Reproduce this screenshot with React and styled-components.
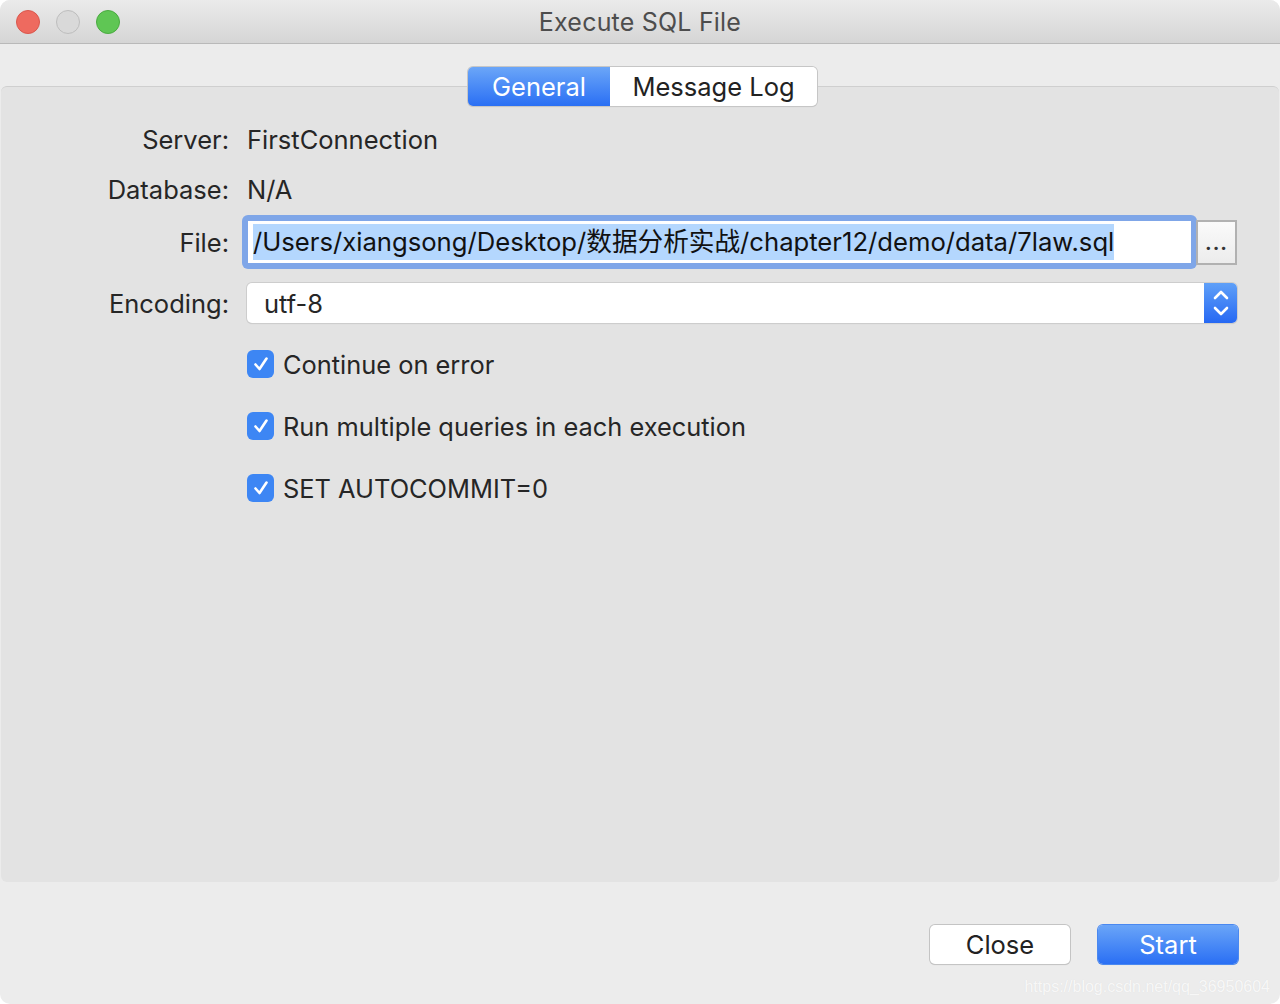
import React from 'react';
import styled, { createGlobalStyle } from 'styled-components';

const GlobalStyle = createGlobalStyle`
  html, body {
    margin: 0;
    padding: 0;
    background: #ffffff;
  }
  body {
    font-family: Inter, "Noto Sans", "Noto Sans CJK SC", sans-serif;
    color: #262626;
  }
`;

const Window = styled.div`
  display: flex;
  flex-direction: column;
  width: 1280px;
  height: 1004px;
  border-radius: 10px;
  overflow: hidden;
  background: #ececec;
  box-sizing: border-box;
`;

const TitleBar = styled.header`
  position: relative;
  display: flex;
  align-items: center;
  justify-content: center;
  height: 43px;
  flex-shrink: 0;
  background: linear-gradient(#ebebeb, #d5d5d5);
  border-bottom: 1px solid #b9b9b9;
`;

const Lights = styled.div`
  position: absolute;
  left: 16px;
  top: 10px;
  display: flex;
  gap: 16px;
`;

const Light = styled.span`
  width: 24px;
  height: 24px;
  border-radius: 50%;
  box-sizing: border-box;
  background: ${(p) => p.color};
  border: 1px solid ${(p) => p.edge};
`;

const Title = styled.div`
  font-size: 25px;
  color: #4d4d4d;
  letter-spacing: 0.2px;
`;

const Body = styled.div`
  flex: 1;
  display: flex;
  flex-direction: column;
  padding-top: 23px;
`;

const Tabs = styled.div`
  position: relative;
  z-index: 1;
  align-self: center;
  display: flex;
  height: 39px;
  margin-bottom: -20px;
  margin-left: 5px;
  border-radius: 5px;
  overflow: hidden;
  box-shadow: 0 0 0 1px #c6c6c6, 0 1px 1px rgba(0, 0, 0, 0.12);
`;

const Tab = styled.div`
  display: flex;
  align-items: center;
  justify-content: center;
  width: ${(p) => p.w}px;
  font-size: 25.5px;
  color: ${(p) => (p.active ? '#ffffff' : '#222222')};
  background: ${(p) => (p.active ? 'linear-gradient(#6ba6f8, #2a6ff4)' : '#ffffff')};
`;

const Panel = styled.section`
  height: 796px;
  margin: 0 1px;
  background: #e3e3e3;
  border-top: 1px solid #cfcfcf;
  border-radius: 6px;
  display: flex;
  flex-direction: column;
  padding-top: 32px;
  box-sizing: border-box;
`;

const Row = styled.div`
  display: flex;
  align-items: center;
  height: ${(p) => p.h}px;
  margin-top: ${(p) => p.mt || 0}px;
  padding-right: 42px;
`;

const Label = styled.div`
  width: 228px;
  text-align: right;
  font-size: 25.5px;
  color: #262626;
  flex-shrink: 0;
  padding-right: 18px;
  box-sizing: content-box;
`;

const Value = styled.div`
  font-size: 25.5px;
  color: #262626;
`;

const FileField = styled.div`
  flex: 1;
  height: 54px;
  margin-left: -5px;
  box-sizing: border-box;
  border-radius: 6px;
  background: #7fa6e8;
  padding: 6px;
  display: flex;
`;

const FileInner = styled.div`
  flex: 1;
  background: #ffffff;
  display: flex;
  align-items: center;
  padding-left: 5px;
  overflow: hidden;
`;

const Selected = styled.span`
  background: #b4d7fe;
  font-size: 25.65px;
  line-height: 36px;
  color: #111111;
  white-space: nowrap;
`;

const BrowseButton = styled.div`
  width: 41px;
  height: 45px;
  margin-left: -1px;
  box-sizing: border-box;
  border: 2px solid #b1b1b1;
  background: linear-gradient(#fafafa, #ececec);
  display: flex;
  align-items: flex-end;
  justify-content: center;
  padding-bottom: 8px;
  font-size: 20px;
  font-weight: bold;
  letter-spacing: 1px;
  color: #333333;
`;

const Select = styled.div`
  flex: 1;
  height: 40px;
  display: flex;
  border-radius: 5px;
  background: #ffffff;
  box-shadow: 0 0 0 1px #cdcdcd, 0 1px 1px rgba(0, 0, 0, 0.15);
  overflow: hidden;
`;

const SelectText = styled.div`
  flex: 1;
  display: flex;
  align-items: center;
  padding-left: 17px;
  font-size: 25.5px;
  color: #262626;
`;

const SelectArrows = styled.div`
  width: 33px;
  background: linear-gradient(#5fa0f8, #2668f3);
  display: flex;
  align-items: center;
  justify-content: center;
`;

const CheckRow = styled.div`
  display: flex;
  align-items: center;
  height: 40px;
  margin-top: ${(p) => p.mt}px;
  padding-left: 246px;
  gap: 9px;
  font-size: 25.4px;
  color: #262626;
`;

const Box = styled.span`
  width: 27px;
  height: 28px;
  border-radius: 6px;
  background: #3d86f4;
  display: flex;
  align-items: center;
  justify-content: center;
`;

const Footer = styled.footer`
  position: relative;
  flex: 1;
  display: flex;
  justify-content: flex-end;
  align-items: flex-start;
  gap: 28px;
  padding: 43px 42px 0 0;
`;

const Button = styled.div`
  width: 140px;
  height: 39px;
  box-sizing: border-box;
  border-radius: 5px;
  display: flex;
  align-items: center;
  justify-content: center;
  font-size: 25.5px;
  color: ${(p) => (p.primary ? '#ffffff' : '#222222')};
  background: ${(p) => (p.primary ? 'linear-gradient(#6aa5f8, #2a6ff4)' : '#ffffff')};
  box-shadow: ${(p) =>
    p.primary
      ? '0 0 0 1px #4a88f0, 0 1px 1px rgba(0,0,0,0.15)'
      : '0 0 0 1px #c4c4c4, 0 1px 1px rgba(0,0,0,0.18)'};
`;

const Watermark = styled.div`
  position: absolute;
  right: 10px;
  bottom: 8px;
  font-family: "Liberation Sans", Arial, sans-serif;
  font-size: 16px;
  color: rgba(255, 255, 255, 0.8);
  text-shadow: 0 0 1px rgba(0, 0, 0, 0.08);
`;

const Check = () => (
  <svg width="18" height="18" viewBox="0 0 18 18">
    <path d="M3.5 9.5 L7.5 14 L14.5 3.5" fill="none" stroke="#ffffff" strokeWidth="2.6" strokeLinecap="round" strokeLinejoin="round" />
  </svg>
);

const Chevrons = () => (
  <svg width="20" height="32" viewBox="0 0 20 32">
    <path d="M4 11 L10 5 L16 11" fill="none" stroke="#ffffff" strokeWidth="2.6" strokeLinecap="round" strokeLinejoin="round" />
    <path d="M4 21 L10 27 L16 21" fill="none" stroke="#ffffff" strokeWidth="2.6" strokeLinecap="round" strokeLinejoin="round" />
  </svg>
);

const options = [
  { label: 'Continue on error', mt: 21 },
  { label: 'Run multiple queries in each execution', mt: 22 },
  { label: 'SET AUTOCOMMIT=0', mt: 22 },
];

export default function App() {
  return (
    <>
      <GlobalStyle />
      <Window>
        <TitleBar>
          <Lights>
            <Light color="#ee6a5f" edge="#d9574d" />
            <Light color="#d9d9d9" edge="#bdbdbd" />
            <Light color="#5fc654" edge="#4aaa40" />
          </Lights>
          <Title>Execute SQL File</Title>
        </TitleBar>
        <Body>
          <Tabs>
            <Tab active w={142}>General</Tab>
            <Tab w={207}>Message Log</Tab>
          </Tabs>
          <Panel>
            <Row h={40}>
              <Label>Server:</Label>
              <Value>FirstConnection</Value>
            </Row>
            <Row h={40} mt={10}>
              <Label>Database:</Label>
              <Value>N/A</Value>
            </Row>
            <Row h={54} mt={6}>
              <Label>File:</Label>
              <FileField>
                <FileInner>
                  <Selected>/Users/xiangsong/Desktop/数据分析实战/chapter12/demo/data/7law.sql</Selected>
                </FileInner>
              </FileField>
              <BrowseButton>...</BrowseButton>
            </Row>
            <Row h={40} mt={14}>
              <Label>Encoding:</Label>
              <Select>
                <SelectText>utf-8</SelectText>
                <SelectArrows>
                  <Chevrons />
                </SelectArrows>
              </Select>
            </Row>
            {options.map((o) => (
              <CheckRow key={o.label} mt={o.mt}>
                <Box>
                  <Check />
                </Box>
                {o.label}
              </CheckRow>
            ))}
          </Panel>
          <Footer>
            <Button>Close</Button>
            <Button primary>Start</Button>
            <Watermark>https://blog.csdn.net/qq_36950604</Watermark>
          </Footer>
        </Body>
      </Window>
    </>
  );
}
